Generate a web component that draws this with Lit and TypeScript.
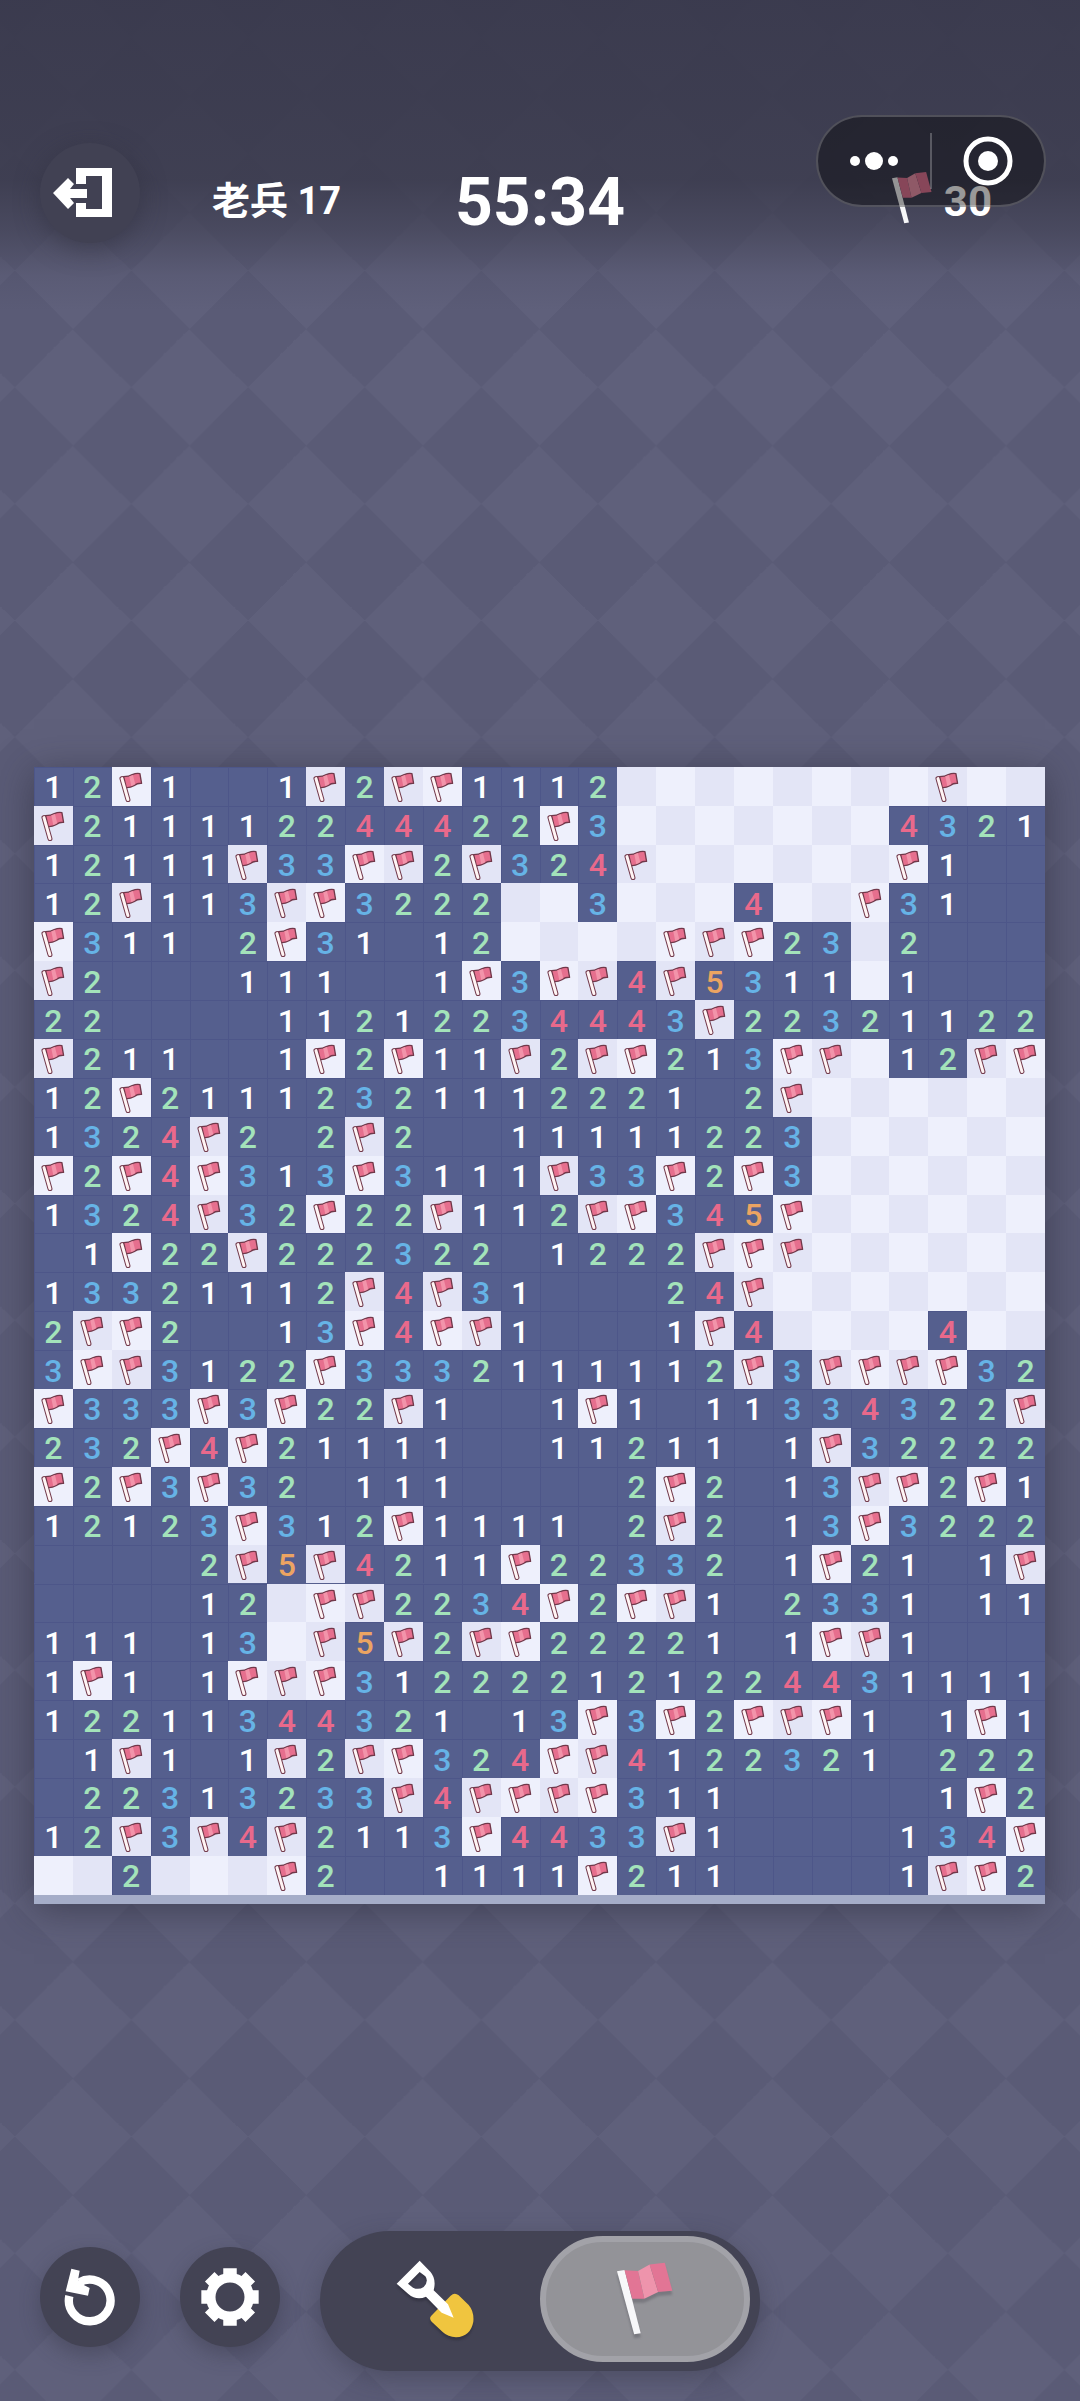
import { LitElement, html, css, svg, nothing } from "lit";
import { customElement, property, state } from "lit/decorators.js";
import { classMap } from "lit/directives/class-map.js";

/* Board legend: digit = neighbour count, "." = cleared, "F" = flagged, "#" = covered */
const ROWS = [
  "12F1..1F2FF1112########F##",
  "F211112244422F3#######4321",
  "12111F33FF2F324F######F1..",
  "12F113FF3222##3###4##F31..",
  "F311.2F31.12####FFF23#2...",
  "F2...111..1F3FF4F5311#1...",
  "22....11212234443F22321122",
  "F211..1F2F11F2FF213FF#12FF",
  "12F21112321112221.2F######",
  "1324F2.2F2..11111223######",
  "F2F4F313F3111F33F2F3######",
  "1324F32F22F112FF345F######",
  ".1F22F222322.1222FFF######",
  "13321112F4F31...24F#######",
  "2FF2..13F4FF1...1F4####4##",
  "3FF3122F3332111112F3FFFF32",
  "F333F3F22F1..1F1.11334322F",
  "232F4F21111..11211.1F32222",
  "F2F3F32.111....2F2.13FF2F1",
  "12123F312F1111.2F2.13F3222",
  "....2F5F4211F22332.1F21.1F",
  "....12#FF2234F2FF1.2331.11",
  "111.13#F5F2FF22221.1FF1...",
  "1F1.1FFF312222121224431111",
  "12211344321.13F3F2FFF1.1F1",
  ".1F1.1F2FF324FF4122321.222",
  ".22313233F4FFFF311.....1F2",
  "12F3F4F2113F4433F1....134F",
  "##2###F2..1111F211....1FF2",
];

const COLUMNS = 26;

const bigFlag = html`
  <svg class="flag" viewBox="0 0 170 220" aria-hidden="true">
    <path d="M0 26 23 22 72 214 52 217Z" fill="#f7f7f9" />
    <path d="M23 23 64 25 83 109 46 109Z" fill="#e27595" />
    <path d="M64 25 99 5 125 89 83 109Z" fill="#ee94ac" />
    <path d="M99 5 145 0 168 85 125 89Z" fill="#e27595" />
  </svg>
`;

const cellFlag = html`
  <svg class="mark" viewBox="0 0 117 117" aria-hidden="true">
    <path d="M30 35 48 98" stroke="#71384a" stroke-width="15" stroke-linecap="round" />
    <path
      d="M35 29Q52 29 61 23 73 18 84 20L89 49Q78 48 66 56 54 63 43 62Z"
      fill="#e66f8e" stroke="#71384a" stroke-width="4" stroke-linejoin="round"
    />
    <path d="M52 28 63 24 70 52 58 58Z" fill="#f294aa" />
    <path d="M30 35 48 98" stroke="#fff4f4" stroke-width="9" stroke-linecap="round" />
  </svg>
`;

const toothAngles = [0, 45, 90, 135];

@customElement("mine-board")
class MineBoard extends LitElement {
  @property({ attribute: false }) rows: string[] = [];

  static styles = css`
    :host {
      display: block;
      box-shadow: 0 6px 36px rgba(40, 40, 54, 0.55);
      border-bottom: 9px solid #a5adc8;
    }
    .grid {
      display: grid;
      grid-template-columns: repeat(26, minmax(0, 1fr));
      background: #555f8e;
    }
    .cell {
      display: flex;
      align-items: center;
      justify-content: center;
      aspect-ratio: 1;
      min-width: 0;
      min-height: 0;
      margin: 0;
      padding: 2px 0 0;
      border: 0;
      border-radius: 0;
      background: #555f8e;
      box-shadow: inset 1px 1px 0 #4d5689;
      color: #fff;
      font: 500 32px/36px Roboto, "Liberation Sans", sans-serif;
    }
    .covered {
      padding: 0;
      background: #e3e5f6;
      box-shadow: none;
    }
    .covered.light {
      background: #eef0fc;
    }
    .n2 { color: #a3e3ba; }
    .n3 { color: #66b3e6; }
    .n4 { color: #e9698b; }
    .n5 { color: #eca462; }
    .mark {
      display: block;
      width: 100%;
      height: 100%;
      fill: none;
    }
  `;

  render() {
    return html`
      <div class="grid">
        ${this.rows.map((row, r) =>
          [...row].slice(0, COLUMNS).map((value, c) => {
            const covered = value === "#" || value === "F";
            return html`<button
              type="button"
              aria-label=${`${r + 1}, ${c + 1}`}
              class=${classMap({
                cell: true,
                covered,
                light: (r + c) % 2 === 0,
                n2: value === "2",
                n3: value === "3",
                n4: value === "4",
                n5: value === "5",
              })}
            >${value === "F" ? cellFlag : /\d/.test(value) ? value : nothing}</button>`;
          })
        )}
      </div>
    `;
  }
}

@customElement("app-root")
class AppRoot extends LitElement {
  @state() private tool: "dig" | "flag" = "flag";

  static styles = css`
    :host {
      display: flex;
      flex-direction: column;
      position: relative;
      min-height: 100vh;
      box-sizing: border-box;
      color: #fff;
      font-family: Roboto, "Noto Sans CJK SC", sans-serif;
      background:
        linear-gradient(
          rgba(56, 56, 75, 0.92) 0,
          rgba(58, 58, 76, 0.86) 180px,
          rgba(62, 62, 80, 0.6) 230px,
          rgba(70, 70, 92, 0.2) 275px,
          rgba(80, 80, 104, 0) 310px
        ),
        conic-gradient(from 45deg, #5f607b 25%, #5a5b76 0 50%, #5f607b 0 75%, #5a5b76 0)
          -44px -21px / 10.8vw 10.8vw;
    }
    button {
      margin: 0;
      padding: 0;
      border: 0;
      color: inherit;
      font: inherit;
      cursor: pointer;
    }
    .top {
      display: grid;
      grid-template-columns: 1fr auto 1fr;
      align-items: center;
      padding: 143px 40px 0;
    }
    .start {
      display: flex;
      align-items: center;
      gap: 72px;
    }
    .round {
      display: flex;
      align-items: center;
      justify-content: center;
      width: 100px;
      height: 100px;
      border-radius: 50%;
      background: #434354;
      box-shadow: 0 8px 20px rgba(50, 50, 66, 0.4);
    }
    .round.quiet {
      background: #414153;
      box-shadow: 0 6px 24px rgba(45, 45, 60, 0.5);
    }
    .exit {
      width: 60px;
      height: 52px;
      margin-right: 16px;
    }
    .level {
      padding-top: 16px;
      font-size: 38px;
      line-height: 48px;
      font-weight: 700;
    }
    .time {
      padding-top: 20px;
      font-size: 66px;
      line-height: 76px;
      font-weight: 700;
    }
    .left {
      display: flex;
      align-items: center;
      justify-content: flex-end;
      gap: 12px;
      padding: 10px 48px 0 0;
      font-size: 42px;
      line-height: 48px;
      font-weight: 700;
    }
    .left span {
      padding-top: 8px;
    }
    .left .flag {
      width: 40px;
      height: 52px;
    }
    .capsule {
      position: absolute;
      top: 115px;
      right: 34px;
      display: flex;
      align-items: center;
      box-sizing: border-box;
      width: 230px;
      height: 92px;
      border: 2px solid rgba(255, 255, 255, 0.2);
      border-radius: 46px;
      background: rgba(0, 0, 0, 0.4);
    }
    .capsule button {
      flex: 1;
      display: flex;
      align-items: center;
      justify-content: center;
      height: 100%;
      background: none;
    }
    .rule {
      width: 2px;
      height: 56px;
      background: rgba(255, 255, 255, 0.24);
    }
    .dots { width: 50px; height: 18px; }
    .target { width: 50px; height: 50px; }
    .above { flex: 8; }
    .below { flex: 5; }
    mine-board { margin: 0 35px 0 34px; }
    .tools {
      display: flex;
      align-items: center;
      gap: 40px;
      padding: 0 40px 30px;
    }
    .pair {
      display: flex;
      gap: 40px;
      padding-bottom: 8px;
    }
    .restart { width: 52px; height: 58px; }
    .gear { width: 58px; height: 58px; }
    .switch {
      display: flex;
      box-sizing: border-box;
      width: 440px;
      height: 140px;
      padding: 5px 10px 9px;
      border-radius: 70px;
      background: #434354;
      box-shadow: 0 8px 24px rgba(50, 50, 66, 0.4);
    }
    .option {
      flex: 1;
      display: flex;
      align-items: center;
      justify-content: center;
      border: 6px solid transparent;
      border-radius: 63px;
      background: none;
    }
    .option.on {
      border-color: #a2a2a8;
      background: #939398;
    }
    .option .flag {
      width: 56px;
      height: 74px;
      filter: drop-shadow(0 4px 1px rgba(60, 60, 70, 0.3));
    }
    .shovel {
      width: 78px;
      height: 78px;
      filter: drop-shadow(0 3px 1px rgba(30, 30, 40, 0.35));
    }
  `;

  render() {
    return html`
      <header class="top">
        <div class="start">
          <button class="round quiet" type="button" aria-label="退出">
            <svg class="exit" viewBox="52 168 60 52" fill="#fff" aria-hidden="true">
              <path d="M76 169H112V218H76V204H86V210H102V177H86V185H76Z" />
              <path d="M53 194 68 179 74 185 70 190H87V199H70L74 204 68 210Z" />
            </svg>
          </button>
          <span class="level">老兵 17</span>
        </div>
        <span class="time">55:34</span>
        <div class="left">${bigFlag}<span>30</span></div>
      </header>

      <div class="capsule">
        <button type="button" aria-label="更多">
          <svg class="dots" viewBox="0 0 50 18" fill="#fff" aria-hidden="true">
            <circle cx="6" cy="9" r="5" />
            <circle cx="25" cy="9" r="9" />
            <circle cx="44" cy="9" r="5" />
          </svg>
        </button>
        <span class="rule"></span>
        <button type="button" aria-label="关闭">
          <svg class="target" viewBox="0 0 50 50" aria-hidden="true">
            <circle cx="25" cy="25" r="22" fill="none" stroke="#fff" stroke-width="5" />
            <circle cx="25" cy="25" r="10" fill="#fff" />
          </svg>
        </button>
      </div>

      <div class="above"></div>
      <mine-board .rows=${ROWS}></mine-board>
      <div class="below"></div>

      <footer class="tools">
        <div class="pair">
          <button class="round" type="button" aria-label="重新开始">
            <svg class="restart" viewBox="102 136 156 174" aria-hidden="true">
              <path
                d="M118 220A62.500 62.500 0 1 0 148 179"
                fill="none" stroke="#fff" stroke-width="25"
              />
              <path d="M124 138 149 144 144 172 160 186 179 196 174 219 107 206Z" fill="#fff" />
            </svg>
          </button>
          <button class="round" type="button" aria-label="设置">
            <svg class="gear" viewBox="-86 -86 172 172" aria-hidden="true">
              <circle r="57" fill="none" stroke="#fff" stroke-width="28" />
              ${toothAngles.map(
                (angle) => svg`<path
                  transform=${`rotate(${angle})`}
                  d="M-20 -85H20V-60H-20ZM-20 60H20V85H-20Z"
                  fill="#fff"
                />`
              )}
            </svg>
          </button>
        </div>
        <div class="switch">
          <button
            type="button"
            aria-label="挖掘"
            aria-pressed=${this.tool === "dig"}
            class=${classMap({ option: true, on: this.tool === "dig" })}
            @click=${() => (this.tool = "dig")}
          >
            <svg class="shovel" viewBox="1106 117 234 234" aria-hidden="true">
              <path
                d="M1270 224Q1282 213 1294 223L1324 252Q1341 272 1338 302 1330 346 1286 349 1262 348 1246 333L1213 302Q1204 292 1212 284Z"
                fill="#f0c53f"
              />
              <path
                fill-rule="evenodd"
                d="M1177 119 1209 152Q1228 174 1219 208L1262 250 1279 290 1243 275 1196 227Q1168 240 1143 219L1108 188ZM1177 153 1142 188 1157 200Q1174 208 1189 198 1205 181 1194 166Z"
                fill="#fff"
              />
            </svg>
          </button>
          <button
            type="button"
            aria-label="插旗"
            aria-pressed=${this.tool === "flag"}
            class=${classMap({ option: true, on: this.tool === "flag" })}
            @click=${() => (this.tool = "flag")}
          >
            ${bigFlag}
          </button>
        </div>
      </footer>
    `;
  }
}
